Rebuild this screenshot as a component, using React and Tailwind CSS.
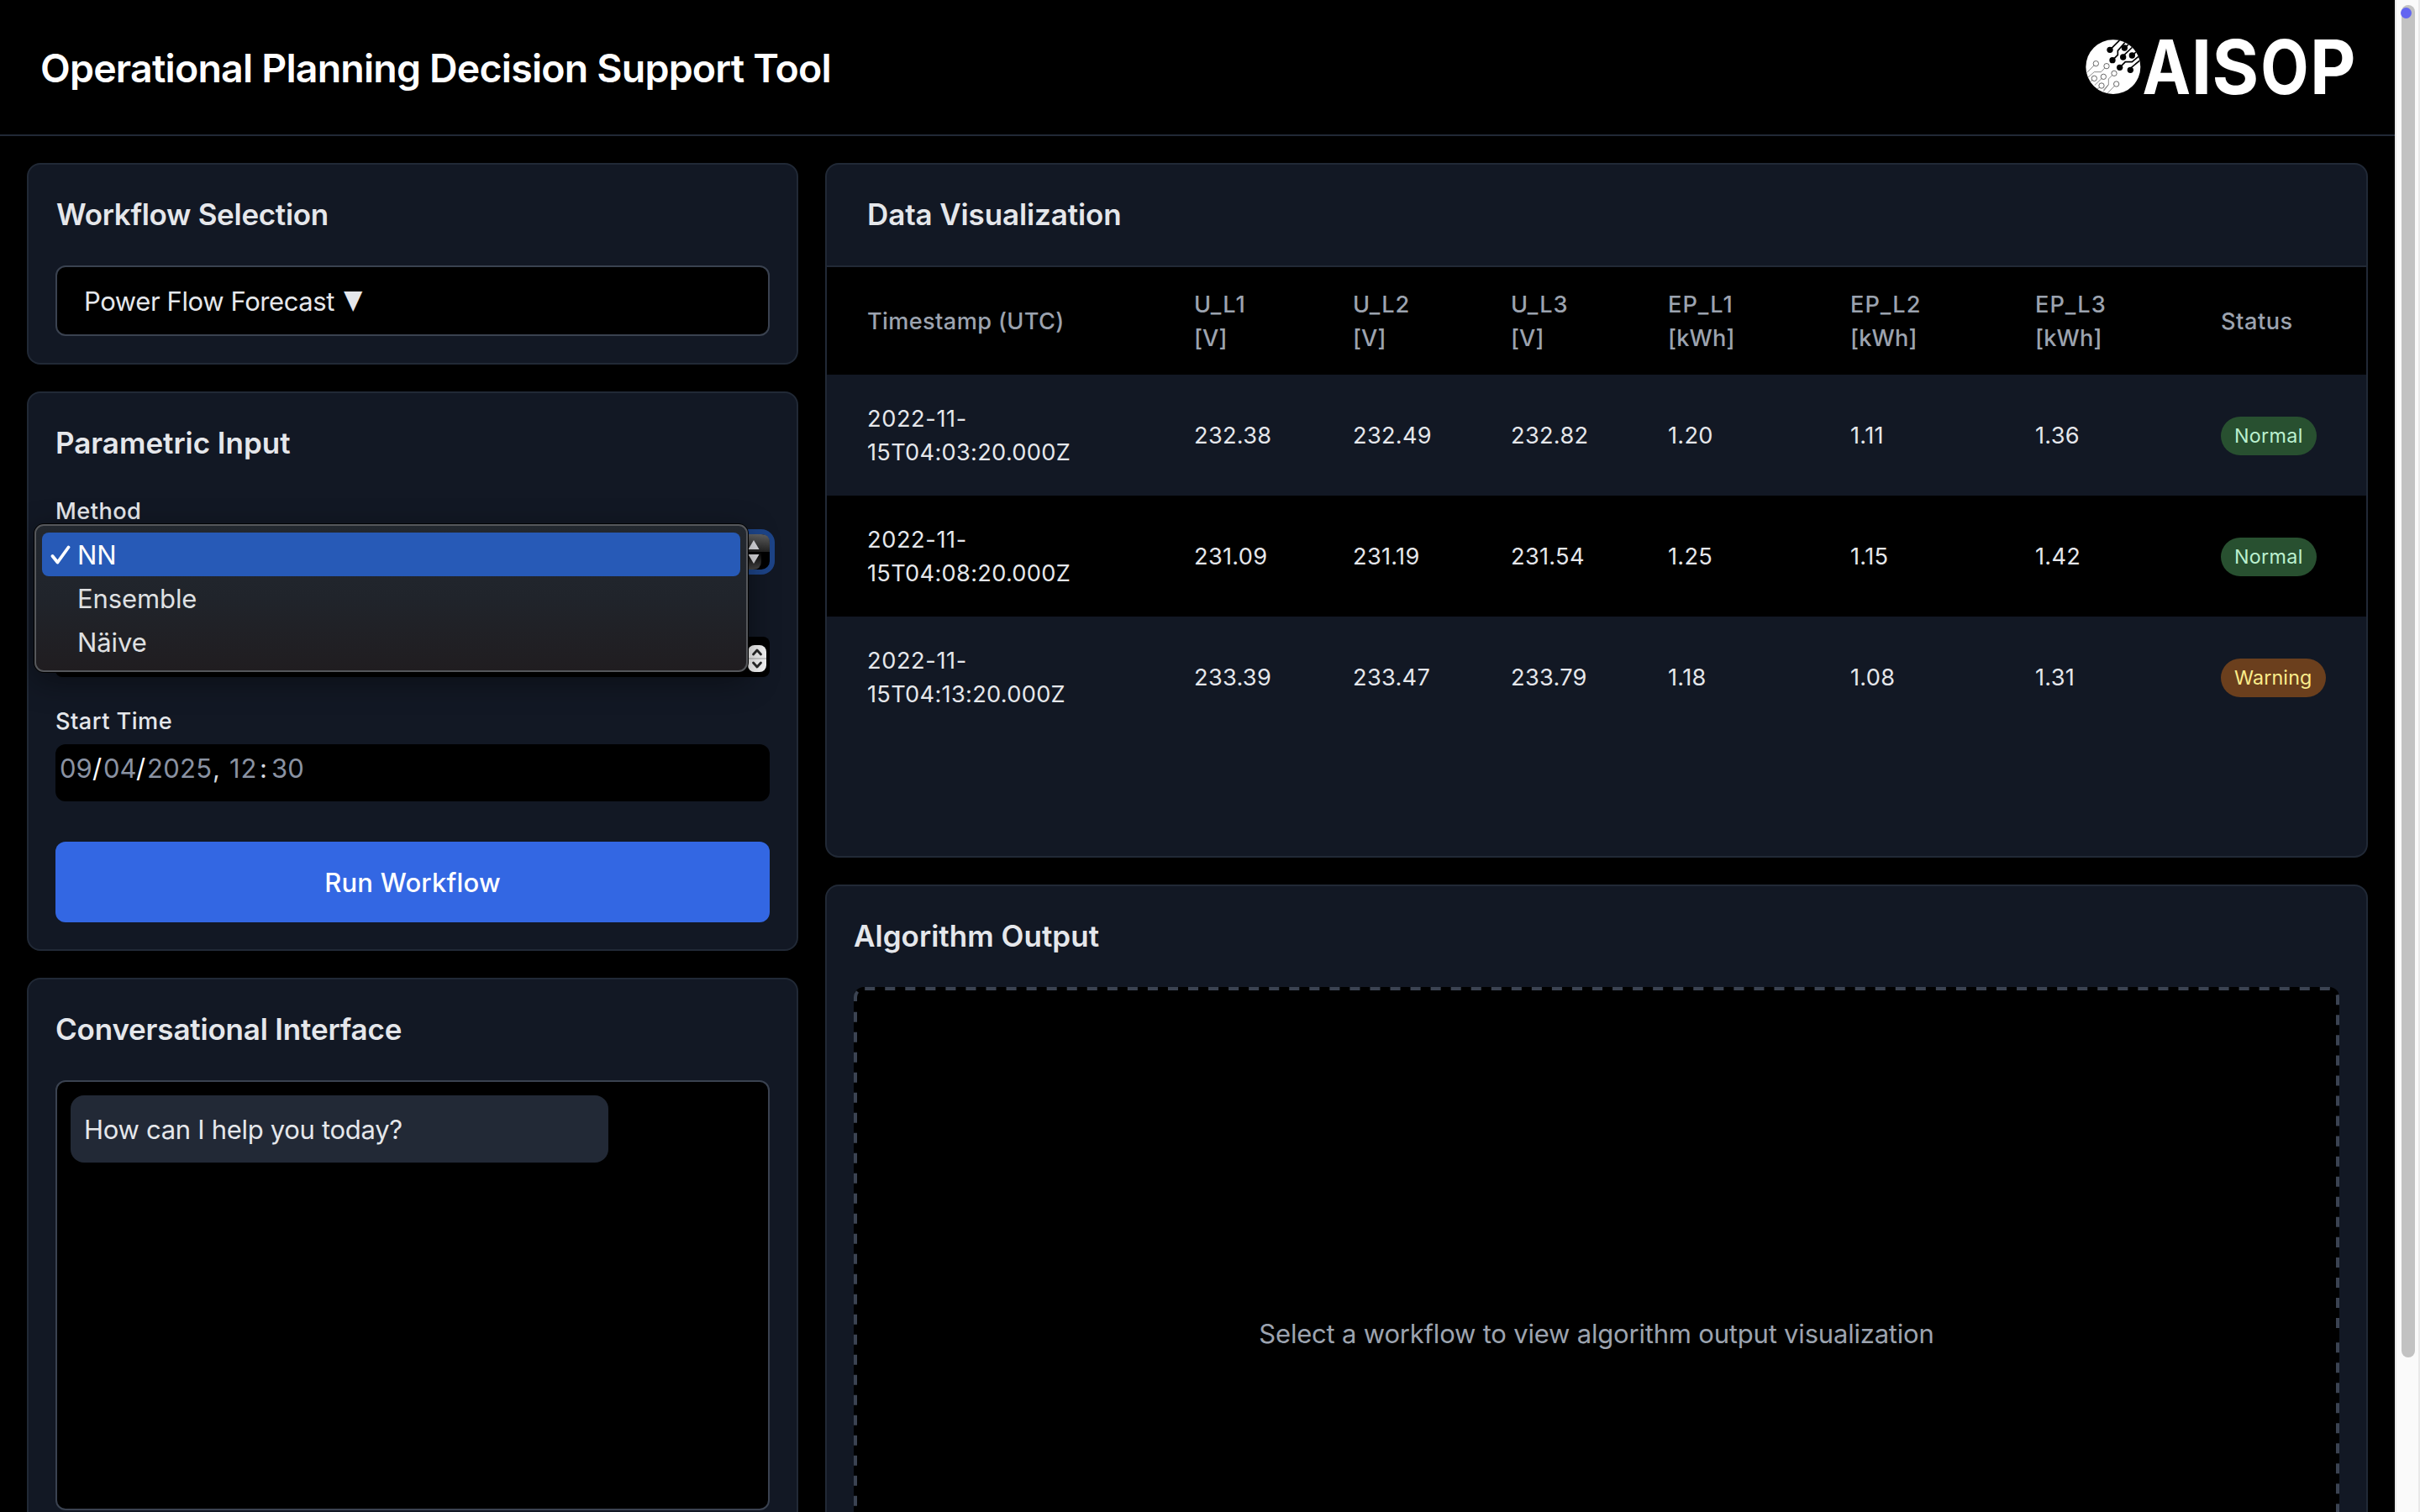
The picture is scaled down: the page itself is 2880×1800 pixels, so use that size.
const heading = "h-14 text-[35px] leading-[54px] font-semibold whitespace-nowrap text-[#e5e7eb]";
const card = "rounded-2xl border-2 border-[#212936] bg-[#121824]";
const label = "h-10 text-[27.2px] leading-[42px] font-[450] tracking-[0.45px] text-[#e5e7eb]";

const rows = [
  { time: "15T04:03:20.000Z", values: ["232.38", "232.49", "232.82", "1.20", "1.11", "1.36"], status: "Normal" },
  { time: "15T04:08:20.000Z", values: ["231.09", "231.19", "231.54", "1.25", "1.15", "1.42"], status: "Normal" },
  { time: "15T04:13:20.000Z", values: ["233.39", "233.47", "233.79", "1.18", "1.08", "1.31"], status: "Warning" },
];

const columns = [
  ["U_L1", "[V]"],
  ["U_L2", "[V]"],
  ["U_L3", "[V]"],
  ["EP_L1", "[kWh]"],
  ["EP_L2", "[kWh]"],
  ["EP_L3", "[kWh]"],
];

const darkNodes = [[213, 178], [265, 171], [292, 198], [260, 204], [222, 215], [248, 241], [286, 250]];
const lightNodes = [[163, 227], [201, 236], [157, 280], [190, 274], [228, 262], [183, 306], [236, 300]];
const letters = [
  ["A", 415, 0.87],
  ["I", 539.5, 1],
  ["S", 661, 0.96],
  ["O", 837, 0.84],
  ["P", 1009, 0.95],
];

function Logo() {
  return (
    <svg viewBox="126 75 963 330" className="h-[110px] w-[321px] overflow-visible" role="img" aria-label="AISOP">
      <defs>
        <clipPath id="globe">
          <ellipse cx="224.5" cy="239" rx="97.5" ry="97" />
        </clipPath>
      </defs>
      <g clipPath="url(#globe)">
        <rect x="126" y="140" width="198" height="198" fill="#fff" />
        <g fill="none" stroke="#000" strokeWidth="5">
          <path d="M213 178 249 142M222 215 241 196V181L268 150M265 171 284 154M260 204V200L300 162M292 198 318 176M248 241 268 221H292L322 196M286 250V244L322 214" />
        </g>
        <g fill="#000">
          {darkNodes.map(([x, y]) => <circle key={`${x}-${y}`} cx={x} cy={y} r="11" />)}
        </g>
        <g fill="none" stroke="#555" strokeWidth="2">
          <path d="M163 227 130 260M201 236 181 257H157L134 277M157 280 143 292M190 274 158 305M228 262 208 282V302L190 326M183 306 168 318M236 300 203 334M208 302 190 322" />
        </g>
        <g fill="#fff" stroke="#444" strokeWidth="2.4">
          {lightNodes.map(([x, y]) => <circle key={`${x}-${y}`} cx={x} cy={y} r="9.5" />)}
        </g>
      </g>
      <g fill="#fff" fontFamily="Inter, sans-serif" fontWeight="700" fontSize="266" textAnchor="middle">
        {letters.map(([ch, x, s]) => (
          <text key={ch} transform={`translate(${x} 336) scale(${s} 1)`}>{ch}</text>
        ))}
      </g>
    </svg>
  );
}

function SelectArrows() {
  return (
    <svg viewBox="0 0 26 42" className="h-[42px] w-[26px]">
      <defs>
        <linearGradient id="up" x1="0" y1="0" x2="0" y2="1">
          <stop offset="0" stopColor="#606060" />
          <stop offset="1" stopColor="#222" />
        </linearGradient>
        <linearGradient id="down" x1="0" y1="0" x2="0" y2="1">
          <stop offset="0" stopColor="#000" />
          <stop offset="1" stopColor="#4a4a4a" />
        </linearGradient>
      </defs>
      <path d="M0 0H16Q26 0 26 10V21H0Z" fill="url(#up)" />
      <path d="M0 21H16V32Q16 42 6 42H0Z" fill="url(#down)" />
      <path d="M.5 18 7 7 13.500 18ZM.5 24H13.500L7 35Z" fill="#dcdce0" />
    </svg>
  );
}

function Stepper() {
  return (
    <svg viewBox="0 0 22 32" className="h-8 w-[22px]">
      <rect width="22" height="32" rx="8" fill="#f6f6f6" />
      <rect y="15" width="22" height="2" fill="#d0d0d0" />
      <path d="M6.500 11 11 6 15.500 11M6.500 21 11 26 15.500 21" fill="none" stroke="#2a2a2a" strokeWidth="2.800" strokeLinecap="round" strokeLinejoin="round" />
    </svg>
  );
}

function MethodMenu() {
  return (
    <div className="absolute top-[-13px] left-[-26px] w-[851px] rounded-xl border border-black bg-black shadow-[0_10px_36px_rgba(0,0,0,0.4)]">
      <div className="h-[176px] rounded-[11px] border-2 border-[#55575b] bg-linear-to-b from-[#23282f] via-[#20242b] to-[#201d20] px-[7px] py-2 text-[31px] leading-[54px] tracking-[-0.1px] text-[#dfe0e2]">
        <div className="flex h-[52px] items-center rounded-lg bg-[#275ab7] text-white">
          <svg viewBox="0 0 24 24" className="ml-[10px] h-6 w-6">
            <path d="M2.500 14 8.500 21.500 21.500 3.500" fill="none" stroke="#fff" strokeWidth="3.800" strokeLinecap="round" strokeLinejoin="round" />
          </svg>
          <span className="ml-[8px] h-[52px]">NN</span>
        </div>
        <div className="h-[52px] pl-[42px]">Ensemble</div>
        <div className="h-[52px] pl-[42px]">Näive</div>
      </div>
    </div>
  );
}

function Badge({ status }) {
  const tone = status === "Normal" ? "bg-[#285030] text-[#bbf0cf]" : "bg-[#6b3f1d] text-[#fbec8a]";
  const spacing = status === "Normal" ? "tracking-[0.3px]" : "tracking-[0.15px]";
  return (
    <span className={`relative block h-[46px] w-fit rounded-full px-4 text-[23.3px] leading-[46px] ${tone} ${spacing}`}>{status}</span>
  );
}

function DataTable() {
  return (
    <table className="w-[1832px] table-fixed border-collapse text-left text-[27.2px] leading-10 tracking-[0.3px]">
      <colgroup>
        <col className="w-[389px]" />
        <col className="w-[189px]" />
        <col className="w-[188px]" />
        <col className="w-[187px]" />
        <col className="w-[217px]" />
        <col className="w-[220px]" />
        <col className="w-[221px]" />
        <col className="w-[221px]" />
      </colgroup>
      <thead className="bg-black text-[#9ca3af]">
        <tr className="h-32">
          <th className="pt-[25px] pb-[23px] pl-12 font-[450] tracking-[0.35px]">Timestamp (UTC)</th>
          {columns.map(([name, unit]) => (
            <th key={name} className="pt-[25px] pb-[23px] pl-12 font-[450]">
              <span className="block tracking-[1px]">{name}</span>
              <span className="block tracking-[0.1px]">{unit}</span>
            </th>
          ))}
          <th className="pt-[25px] pb-[23px] pl-12 font-[450] tracking-[0.5px]">Status</th>
        </tr>
      </thead>
      <tbody className="text-[#e5e7eb]">
        {rows.map((row) => (
          <tr key={row.time} className="h-36 even:bg-black">
            <td className="pt-[33px] pb-[31px] pl-12 whitespace-nowrap">
              <span className="block tracking-[0.6px]">2022-11-</span>
              <span className="block">{row.time}</span>
            </td>
            {row.values.map((value) => <td key={value} className="pt-[33px] pb-[31px] pl-12">{value}</td>)}
            <td className="pt-0.5 pl-12"><Badge status={row.status} /></td>
          </tr>
        ))}
      </tbody>
    </table>
  );
}

function Dashes() {
  return (
    <svg viewBox="0 0 1768 824" className="absolute inset-0 h-[824px] w-[1768px]">
      <g fill="none" stroke="#3b4352" strokeWidth="4">
        <path d="M13.200 2H1756A10 10 0 0 1 1766 12V410" strokeDasharray="12.050 12" />
        <path d="M1766 423.300V824" strokeDasharray="12 12" />
        <path d="M2 29.700V824" strokeDasharray="12 12" />
        <path d="M2 17V12A10 10 0 0 1 4.500 5.500" />
      </g>
    </svg>
  );
}

export default function App() {
  return (
    <div className="flex h-[1800px] w-[2880px] overflow-hidden bg-black font-[Inter,sans-serif]">
      <div className="flex w-[2850px] flex-col">
        <header className="flex h-[162px] shrink-0 items-center justify-between border-b-2 border-[#212936] pr-[47px] pl-12">
          <h1 className="h-16 text-[46.5px] leading-[66px] font-semibold tracking-[-0.81px] text-white">Operational Planning Decision Support Tool</h1>
          <Logo />
        </header>

        <main className="grid grid-cols-[918px_1836px] items-start gap-8 p-8">
          <div className="flex flex-col gap-8">
            <section className={`${card} p-8`}>
              <h2 className={`${heading} pl-px tracking-[-0.3px]`}>Workflow Selection</h2>
              <div className="mt-8 flex h-[84px] items-center rounded-xl border-2 border-[#3a4250] bg-black px-8 pt-0.5 text-[31px] leading-[48px] text-[#e5e7eb]">
                <span className="tracking-[-0.4px]">Power Flow Forecast</span>
                <span className="ml-[10px] inline-block origin-left scale-x-[0.78] leading-[48px]">▼</span>
              </div>
            </section>

            <section className={`${card} p-8`}>
              <h2 className={`${heading} tracking-[-0.03px]`}>Parametric Input</h2>
              <div className={`mt-8 ${label}`}>Method</div>
              <div className="relative z-10 mt-2">
                <div className="flex h-[42px] justify-end rounded-[10px] bg-black ring-6 ring-[#1d4488]">
                  <SelectArrows />
                </div>
                <MethodMenu />
              </div>
              <div className="mt-20 flex h-12 items-center justify-end rounded-lg bg-black pt-1 pr-1">
                <Stepper />
              </div>
              <div className={`mt-8 ${label}`}>Start Time</div>
              <div className="mt-2 flex h-[68px] rounded-xl bg-black pt-[5px] pl-[5px] text-[31px] leading-[48px] text-[#8a92a2]">
                <span className="w-[39px]">09</span>
                <span className="w-[13px] text-white">/</span>
                <span className="w-[39px]">04</span>
                <span className="w-[13px] text-white">/</span>
                <span className="w-[78px] tracking-[0.3px]">2025</span>
                <span className="w-[20px] text-[#d5d8de]">,</span>
                <span className="w-[36px] tracking-[1px]">12</span>
                <span className="w-[14px] text-[#d5d8de]">:</span>
                <span>30</span>
              </div>
              <button className="mt-12 h-24 w-full rounded-xl bg-[#3367e3] pt-0.5 text-[31px] leading-[48px] font-medium tracking-[0.2px] text-white">Run Workflow</button>
            </section>

            <section className={`${card} p-8`}>
              <h2 className={`${heading} tracking-[-0.18px]`}>Conversational Interface</h2>
              <div className="mt-8 h-[512px] rounded-xl border-2 border-[#3a4250] bg-black p-4">
                <div className="h-20 w-[640px] rounded-2xl bg-[#222936] px-4 pt-[17px] text-[31px] leading-[48px] tracking-[-0.3px] text-[#e5e7eb]">How can I help you today?</div>
              </div>
            </section>
          </div>

          <div className="flex flex-col gap-8">
            <section className={`${card} h-[827px] overflow-hidden`}>
              <div className="border-b-2 border-[#212936] px-12 py-8">
                <h2 className={`${heading} tracking-[-0.12px]`}>Data Visualization</h2>
              </div>
              <DataTable />
            </section>

            <section className={`${card} p-8`}>
              <h2 className={`${heading} tracking-[0.02px]`}>Algorithm Output</h2>
              <div className="relative mt-8 flex h-[824px] items-center justify-center rounded-xl bg-black pt-0.5">
                <Dashes />
                <p className="text-[31px] leading-[48px] tracking-[-0.2px] text-[#9ca3af]">Select a workflow to view algorithm output visualization</p>
              </div>
            </section>
          </div>
        </main>
      </div>

      <div className="relative w-[30px] shrink-0 border-x-2 border-[#e9e9e9] bg-[#fafafa] pt-1.5 pl-1.5">
        <div className="h-[1610px] w-4 rounded-full bg-[#c2c2c2]" />
        <div className="absolute top-[9px] left-[5px] h-[13px] w-[13px] rounded-full bg-[#6366f1]" />
      </div>
    </div>
  );
}
